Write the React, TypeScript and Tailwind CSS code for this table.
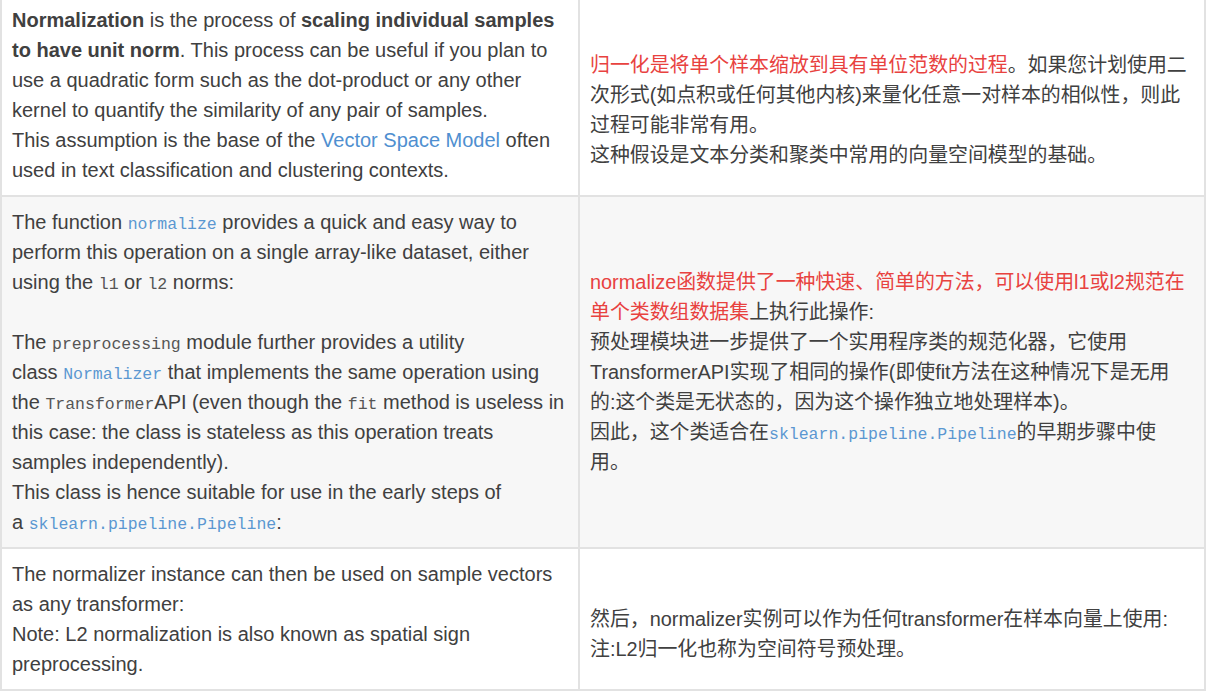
import React from "react";

const sans = { fontFamily: '"Liberation Sans", Arial, "Noto Sans CJK SC", sans-serif' };

const Code = ({ children, link }: { children: React.ReactNode; link?: boolean }) => (
  <code
    className={
      link
        ? "font-['Liberation_Mono',monospace] text-[16.5px] leading-none text-[#5b97d1]"
        : "font-['Liberation_Mono',monospace] text-[16.5px] leading-none text-[#555]"
    }
  >
    {children}
  </code>
);

const Red = ({ children }: { children: React.ReactNode }) => (
  <span className="text-[#e8423f]">{children}</span>
);

const cell = "border-2 border-[#e2e2e2] px-[10px] py-[10px] align-middle";
const left = cell + " text-[20px]";
const right = cell + " text-[19.9px]";

export default function App() {
  return (
    <div className="min-h-screen bg-white overflow-hidden" style={sans}>
      <table className="-mt-[7px] w-[1204px] table-fixed border-collapse leading-[30px] text-[#404040]">
        <colgroup>
          <col className="w-[578px]" />
          <col className="w-[626px]" />
        </colgroup>
        <tbody>
          {/* row 1 */}
          <tr className="bg-white">
            <td className={left}>
              <b>Normalization</b> is the process of <b>scaling individual samples to have unit norm</b>. This
              process can be useful if you plan to use a quadratic form such as the dot-product or any other
              kernel to quantify the similarity of any pair of samples.
              <br />
              This assumption is the base of the <span className="text-[#4f8fd0]">Vector Space Model</span> often
              used in text classification and clustering contexts.
            </td>
            <td className={right}>
              <br />
              <Red>归一化是将单个样本缩放到具有单位范数的过程</Red>。如果您计划使用二
              <br />
              次形式(如点积或任何其他内核)来量化任意一对样本的相似性，则此
              <br />
              过程可能非常有用。
              <br />
              这种假设是文本分类和聚类中常用的向量空间模型的基础。
            </td>
          </tr>

          {/* row 2 */}
          <tr className="bg-[#f7f7f7]">
            <td className={left}>
              The function <Code link>normalize</Code> provides a quick and easy way to perform this operation on
              a single array-like dataset, either using the <Code>l1</Code> or <Code>l2</Code> norms:
              <br />
              <br />
              The <Code>preprocessing</Code> module further provides a utility class{"\u00a0"}
              <Code link>Normalizer</Code> that implements the same operation using the{"\u00a0"}
              <Code>Transformer</Code>API (even though the <Code>fit</Code> method is useless in this case: the
              class is stateless as this operation treats samples independently).
              <br />
              This class is hence suitable for use in the early steps of a{"\u00a0"}
              <Code link>sklearn.pipeline.Pipeline</Code>:
            </td>
            <td className={right}>
              <Red>
                normalize函数提供了一种快速、简单的方法，可以使用l1或l2规范在
                <br />
                单个类数组数据集
              </Red>
              上执行此操作:
              <br />
              预处理模块进一步提供了一个实用程序类的规范化器，它使用
              <br />
              TransformerAPI实现了相同的操作(即使fit方法在这种情况下是无用
              <br />
              的:这个类是无状态的，因为这个操作独立地处理样本)。
              <br />
              因此，这个类适合在<Code link>sklearn.pipeline.Pipeline</Code>的早期步骤中使
              <br />
              用。
            </td>
          </tr>

          {/* row 3 */}
          <tr className="bg-white">
            <td className={left}>
              The normalizer instance can then be used on sample vectors as any transformer:
              <br />
              Note: L2 normalization is also known as spatial sign preprocessing.
            </td>
            <td className={right}>
              <br />
              然后，normalizer实例可以作为任何transformer在样本向量上使用:
              <br />
              注:L2归一化也称为空间符号预处理。
            </td>
          </tr>
        </tbody>
      </table>
    </div>
  );
}
